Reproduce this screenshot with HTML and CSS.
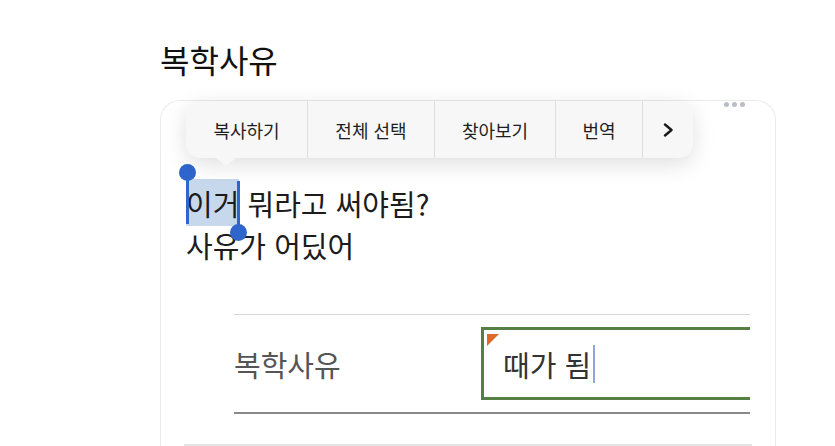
FILE: index.html
```html
<!DOCTYPE html>
<html lang="ko">
<head>
    <meta charset="UTF-8">
    <meta name="viewport" content="width=device-width, initial-scale=1.0">
    <title>복학사유</title>
    <link rel="stylesheet" href="styles.css">
</head>
<body>
    <div class="page">
        <h1 class="title">복학사유</h1>

        <div class="card">
            <div class="dots"><span></span><span></span><span></span></div>

            <div class="menu">
                <div class="menu-item">복사하기</div>
                <div class="menu-item">전체 선택</div>
                <div class="menu-item">찾아보기</div>
                <div class="menu-item">번역</div>
                <div class="menu-item more">
                    <svg width="11" height="14" viewBox="0 0 11 14"><path d="M2 1.5 L8.5 7 L2 12.5" fill="none" stroke="#1a1a1a" stroke-width="2.4" stroke-linejoin="round" stroke-linecap="round"/></svg>
                </div>
                <div class="menu-arrow"></div>
            </div>

            <div class="message">
                <span class="selected">이거<i class="handle start"></i><i class="handle end"></i></span> 뭐라고 써야됨?<br>
                사유가 어딨어
            </div>

            <div class="form-table">
                <div class="form-row">
                    <div class="form-label">복학사유</div>
                    <div class="form-cell">
                        <span class="note-mark"></span>
                        <span class="cell-text">때가 됨</span><span class="caret"></span>
                    </div>
                </div>
            </div>

            <div class="footer-line"></div>
        </div>
    </div>
</body>
</html>
```

FILE: styles.css
```css
body {
    margin: 0;
    background: #fff;
    font-family: "Noto Sans CJK KR", "Noto Sans", sans-serif;
    color: #1a1a1a;
    overflow: hidden;
}
.page {
    padding-top: 38px;
    padding-left: 160px;
}
.title {
    margin: 0;
    font-size: 32px;
    font-weight: 400;
    line-height: 42px;
    color: #111;
}
.card {
    position: relative;
    width: 614px;
    height: 400px;
    margin-top: 20px;
    border: 1px solid #ebebeb;
    border-bottom: none;
    border-radius: 20px 20px 0 0;
}
.dots {
    position: absolute;
    top: 1px;
    right: 30px;
    display: flex;
    gap: 3px;
}
.dots span {
    width: 5px;
    height: 5px;
    border-radius: 50%;
    background: #b7bec6;
}
.menu {
    position: absolute;
    top: 0;
    left: 25px;
    display: flex;
    height: 57px;
    background: #f7f7f7;
    border-radius: 14px;
    box-shadow: 0 6px 22px rgba(0, 0, 0, 0.13);
    z-index: 2;
}
.menu-item {
    display: flex;
    align-items: center;
    justify-content: center;
    font-size: 18px;
    color: #1e1e1e;
    border-left: 1px solid #dedede;
}
.menu-item:nth-child(1) { width: 121px; border-left: none; }
.menu-item:nth-child(2) { width: 126px; }
.menu-item:nth-child(3) { width: 120px; }
.menu-item:nth-child(4) { width: 86px; }
.menu-item.more { width: 50px; }
.menu-arrow {
    position: absolute;
    left: 30px;
    bottom: -8px;
    width: 0;
    height: 0;
    border-left: 10px solid transparent;
    border-right: 10px solid transparent;
    border-top: 8px solid #f7f7f7;
}
.message {
    padding-top: 81px;
    padding-left: 25px;
    font-size: 29px;
    line-height: 42px;
    color: #1c1c1c;
}
.selected {
    position: relative;
    background: #c8d8ec;
    padding: 3px 0 2px;
}
.handle {
    position: absolute;
    width: 3px;
    background: #2f66cc;
}
.handle::after {
    content: "";
    position: absolute;
    left: -7px;
    width: 17px;
    height: 17px;
    border-radius: 50%;
    background: #2f66cc;
}
.handle.start {
    left: 0;
    top: -7px;
    height: 52px;
}
.handle.start::after {
    top: -8px;
}
.handle.end {
    right: -1px;
    top: 2px;
    height: 52px;
}
.handle.end::after {
    bottom: -8px;
}
.form-table {
    width: 516px;
    margin-top: 48px;
    margin-left: 73px;
    border-top: 1px solid #d8d8d8;
    border-bottom: 2px solid #8a8a8a;
    padding: 12px 0;
}
.form-row {
    display: flex;
    align-items: center;
}
.form-label {
    width: 247px;
    font-size: 29px;
    color: #555;
}
.form-cell {
    position: relative;
    flex: 1;
    height: 67px;
    display: flex;
    align-items: center;
    padding-left: 19px;
    border: 3px solid #587f43;
    border-right: none;
    font-size: 29px;
    color: #333;
}
.note-mark {
    position: absolute;
    top: 4px;
    left: 3px;
    width: 0;
    height: 0;
    border-top: 12px solid #de6a2a;
    border-right: 12px solid transparent;
}
.caret {
    width: 2px;
    height: 38px;
    margin-left: 2px;
    background: #8ea6dc;
}
.footer-line {
    width: 568px;
    margin-top: 30px;
    margin-left: 23px;
    border-top: 2px solid #e3e3e3;
}
```
